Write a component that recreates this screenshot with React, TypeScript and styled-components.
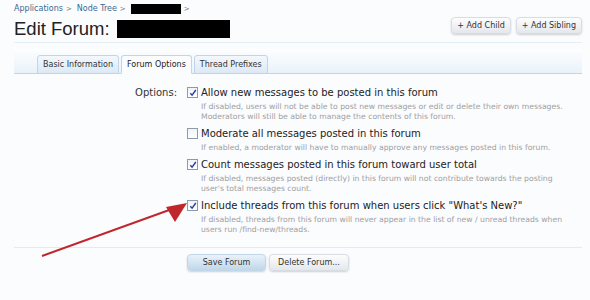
import React from "react";
import styled, { createGlobalStyle } from "styled-components";

const Global = createGlobalStyle`
  html, body { margin: 0; padding: 0; background: #fbfcfe; }
  body { font-family: "DejaVu Sans", Verdana, sans-serif; color: #222; }
`;

const Page = styled.div`
  position: relative;
  width: 590px;
  height: 300px;
  box-sizing: border-box;
  padding: 2px 8px 0 14px;
  overflow: hidden;
`;

const Crumbs = styled.div`
  display: flex;
  align-items: center;
  height: 13px;
  font-family: "DejaVu Sans", sans-serif;
  font-size: 8px;
  color: #3a6891;
`;

const Crumb = styled.span`
  margin-right: 5px;
  white-space: nowrap;
`;

const Sep = styled.span`
  color: #777;
  font-size: 7px;
  margin-left: 3px;
`;

const Redact = styled.span<{ $w: number; $h: number }>`
  display: inline-block;
  width: ${(p) => p.$w}px;
  height: ${(p) => p.$h}px;
  background: #000;
`;

const TitleBar = styled.div`
  display: flex;
  align-items: center;
  justify-content: space-between;
  height: 27px;
  border-bottom: 1px solid #e4eef5;
`;

const Title = styled.h1`
  display: flex;
  align-items: center;
  gap: 7px;
  margin: 0;
  font-family: "Liberation Sans", Arial, sans-serif;
  font-weight: normal;
  font-size: 18.5px;
  color: #222;
`;

const TopButtons = styled.div`
  display: flex;
  gap: 5px;
  margin-bottom: 6px;
`;

const Btn = styled.button<{ $primary?: boolean; $min?: number }>`
  height: 17px;
  min-width: ${(p) => p.$min ?? 0}px;
  padding: 0 5px;
  border: 1px solid ${(p) => (p.$primary ? "#c2d6e8" : "#d8dde3")};
  border-radius: 4px;
  font-family: "DejaVu Sans", sans-serif;
  font-size: 8px;
  color: #333;
  background: ${(p) =>
    p.$primary
      ? "linear-gradient(#e9f2fa, #bfd7eb)"
      : "linear-gradient(#fdfdfe, #e4e7ec)"};
  box-shadow: 0 1px 2px rgba(0, 0, 0, 0.18);
`;

const TabStrip = styled.div`
  display: flex;
  align-items: flex-end;
  gap: 2px;
  margin-top: 6px;
  height: 24px;
  padding-left: 23px;
  background: linear-gradient(#fdfeff, #e9f2fa);
  border-bottom: 1px solid #bfd6ea;
`;

const Tab = styled.div<{ $active?: boolean }>`
  display: flex;
  align-items: center;
  height: 17px;
  padding: 0 5px;
  margin-bottom: -1px;
  font-size: 8px;
  color: ${(p) => (p.$active ? "#222" : "#333")};
  border: 1px solid #bfd6ea;
  border-bottom-color: ${(p) => (p.$active ? "#fbfcfe" : "#bfd6ea")};
  border-radius: 3px 3px 0 0;
  background: ${(p) =>
    p.$active ? "#fbfcfe" : "linear-gradient(#f3f8fc, #dce9f5)"};
`;

const Form = styled.div`
  display: grid;
  grid-template-columns: 163px 1fr;
  column-gap: 10px;
  padding-top: 12px;
  height: 174px;
  box-sizing: border-box;
  border-bottom: 1px solid #e1ebf2;
`;

const Label = styled.div`
  text-align: right;
  font-size: 10px;
  line-height: 13px;
  color: #333;
`;

const OptionList = styled.div`
  display: flex;
  flex-direction: column;
  gap: 5.5px;
`;

const Option = styled.div`
  display: grid;
  grid-template-columns: 13px 1fr;
  column-gap: 1px;
`;

const Box = styled.span`
  width: 9px;
  height: 9px;
  margin-top: 1px;
  border: 1px solid #8d9aab;
  background: linear-gradient(#f0f2f5, #fff);
  display: flex;
  align-items: center;
  justify-content: center;
`;

const OptTitle = styled.div`
  font-size: 10px;
  line-height: 13px;
  color: #222;
  white-space: nowrap;
`;

const Explain = styled.div`
  grid-column: 2;
  font-size: 7.7px;
  line-height: 10px;
  color: #a0a0a0;
  padding-top: 2.5px;
  max-width: 366px;
`;

const Footer = styled.div`
  display: flex;
  gap: 3px;
  padding: 6px 0 0 173px;
`;

const Arrow = styled.svg`
  position: absolute;
  left: 0;
  top: 0;
  pointer-events: none;
`;

const Check = ({ on }: { on: boolean }) => (
  <Box>
    {on && (
      <svg width="8" height="8" viewBox="0 0 8 8">
        <path d="M1.3 4.2 L3.1 6.2 L6.8 1" fill="none" stroke="#2a3f9a" strokeWidth="1.4" />
      </svg>
    )}
  </Box>
);

const options = [
  {
    on: true,
    title: "Allow new messages to be posted in this forum",
    explain:
      "If disabled, users will not be able to post new messages or edit or delete their own messages. Moderators will still be able to manage the contents of this forum.",
  },
  {
    on: false,
    title: "Moderate all messages posted in this forum",
    explain: "If enabled, a moderator will have to manually approve any messages posted in this forum.",
  },
  {
    on: true,
    title: "Count messages posted in this forum toward user total",
    explain:
      "If disabled, messages posted (directly) in this forum will not contribute towards the posting user's total messages count.",
  },
  {
    on: true,
    title: 'Include threads from this forum when users click "What\'s New?"',
    explain:
      "If disabled, threads from this forum will never appear in the list of new / unread threads when users run /find-new/threads.",
  },
];

export default function App() {
  return (
    <>
      <Global />
      <Page>
        <Crumbs>
          <Crumb>
            Applications<Sep>&gt;</Sep>
          </Crumb>
          <Crumb>
            Node Tree<Sep>&gt;</Sep>
          </Crumb>
          <Redact $w={50} $h={10} />
          <Sep>&gt;</Sep>
        </Crumbs>
        <TitleBar>
          <Title>
            Edit Forum: <Redact $w={113} $h={18} />
          </Title>
          <TopButtons>
            <Btn>+ Add Child</Btn>
            <Btn>+ Add Sibling</Btn>
          </TopButtons>
        </TitleBar>
        <TabStrip>
          <Tab>Basic Information</Tab>
          <Tab $active>Forum Options</Tab>
          <Tab>Thread Prefixes</Tab>
        </TabStrip>
        <Form>
          <Label>Options:</Label>
          <OptionList>
            {options.map((o) => (
              <Option key={o.title}>
                <Check on={o.on} />
                <OptTitle>{o.title}</OptTitle>
                <Explain>{o.explain}</Explain>
              </Option>
            ))}
          </OptionList>
        </Form>
        <Footer>
          <Btn $primary $min={79}>Save Forum</Btn>
          <Btn $min={80}>Delete Forum...</Btn>
        </Footer>
        <Arrow width="590" height="300" viewBox="0 0 590 300">
          <line x1="42" y1="256" x2="172" y2="209" stroke="#c0272d" strokeWidth="2" />
          <polygon points="187,203 166,207 175,222" fill="#c0272d" />
        </Arrow>
      </Page>
    </>
  );
}
